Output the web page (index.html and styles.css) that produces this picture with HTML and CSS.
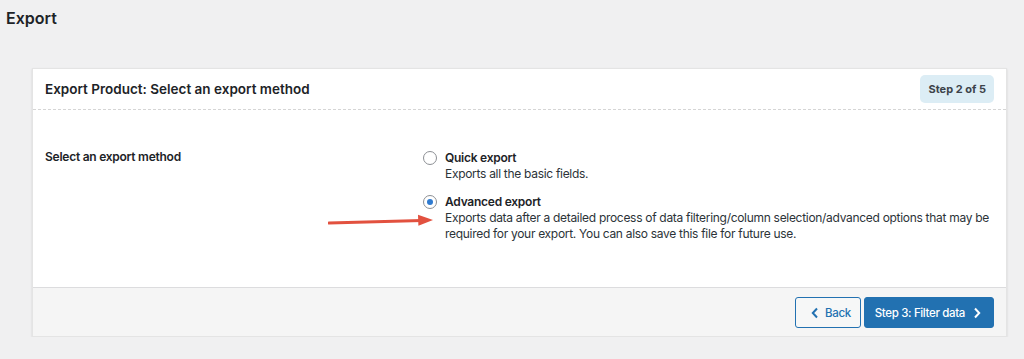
FILE: index.html
```html
<!DOCTYPE html>
<html lang="en">
<head>
  <meta charset="UTF-8" />
  <title>Export</title>
  <link rel="stylesheet" href="styles.css">
</head>
<body>
  <h1 class="page-title">Export</h1>

  <div class="card">
    <div class="card-head">
      <h2>Export Product: Select an export method</h2>
      <span class="step">Step 2 of 5</span>
    </div>

    <div class="card-body">
      <div class="field-label">Select an export method</div>
      <div class="options">
        <label class="option">
          <input type="radio" name="method" value="quick" />
          <span class="option-text">
            <strong>Quick export</strong>
            <span class="desc">Exports all the basic fields.</span>
          </span>
        </label>
        <label class="option">
          <input type="radio" name="method" value="advanced" checked />
          <span class="option-text">
            <strong>Advanced export</strong>
            <span class="desc">Exports data after a detailed process of data filtering/column selection/advanced options that may be required for your export. You can also save this file for future use.</span>
          </span>
        </label>
        <svg class="arrow" width="112" height="16" viewBox="0 0 112 16">
          <path d="M1 10 L94 7.4" stroke="#e2513f" stroke-width="3" stroke-linecap="round" fill="none"/>
          <path d="M90 1.8 L105 7 L90.4 12.8 Z" fill="#e2513f"/>
        </svg>
      </div>
    </div>

    <div class="card-foot">
      <button class="btn btn-back">
        <svg width="8" height="12" viewBox="0 0 8 12"><path d="M6 1.5 L1.8 6 L6 10.5" stroke="currentColor" stroke-width="2" fill="none"/></svg>
        Back
      </button>
      <button class="btn btn-primary">
        Step 3: Filter data
        <svg width="8" height="12" viewBox="0 0 8 12"><path d="M2 1.5 L6.2 6 L2 10.5" stroke="currentColor" stroke-width="2" fill="none"/></svg>
      </button>
    </div>
  </div>
</body>
</html>
```

FILE: styles.css
```css
body {
  margin: 0;
  background: #f0f0f1;
  color: #1d2327;
  font-family: Inter, "Noto Sans", sans-serif;
  font-size: 12px;
  letter-spacing: -0.25px;
}
.page-title {
  margin: 0;
  padding: 8px 6px 0;
  font-size: 16px;
  font-weight: 600;
  line-height: 20px;
  letter-spacing: 0;
}
.card {
  margin: 40px 17px 0 32px;
  background: #fff;
  border: 1px solid #e4e4e4;
  box-shadow: 0 1px 2px rgba(0, 0, 0, 0.12);
}
.card-head {
  display: flex;
  align-items: center;
  justify-content: space-between;
  padding: 6px 12px 6px 12px;
  border-bottom: 1px dashed #d5d5d5;
}
.card-head h2 {
  margin: 0;
  font-size: 13.5px;
  font-weight: 600;
  letter-spacing: 0;
}
.step {
  background: #dcedf5;
  color: #3c434a;
  font-size: 11px;
  font-weight: 700;
  letter-spacing: 0;
  padding: 0 8px;
  line-height: 28px;
  border-radius: 5px;
}
.card-body {
  display: grid;
  grid-template-columns: 378px 1fr;
  padding: 40px 12px 45px 12px;
}
.field-label {
  font-weight: 600;
  margin-top: -1px;
}
.options {
  position: relative;
  display: flex;
  flex-direction: column;
  gap: 12px;
}
.option {
  display: flex;
  gap: 8px;
  align-items: flex-start;
}
.option input {
  appearance: none;
  margin: 1px 0 0 0;
  width: 14px;
  height: 14px;
  border: 1px solid #8c8f94;
  border-radius: 50%;
  background: #fff;
  flex: none;
  position: relative;
}
.option input:checked::after {
  content: "";
  position: absolute;
  left: 3px;
  top: 3px;
  width: 6px;
  height: 6px;
  border-radius: 50%;
  background: #2f7bd0;
}
.option-text {
  display: flex;
  flex-direction: column;
  line-height: 16px;
}
.option-text strong {
  font-weight: 600;
}
.desc {
  color: #2c3338;
  letter-spacing: -0.3px;
}
.arrow {
  position: absolute;
  left: -95px;
  top: 63px;
}
.card-foot {
  display: flex;
  justify-content: flex-end;
  gap: 3px;
  padding: 9px 12px 8px;
  background: #f5f5f5;
  border-top: 1px solid #dcdcde;
}
.btn {
  display: flex;
  align-items: center;
  height: 31px;
  border-radius: 3px;
  font-family: inherit;
  font-size: 11.5px;
  font-weight: 500;
  letter-spacing: -0.35px;
  cursor: pointer;
}
.btn-back {
  gap: 6px;
  padding: 0 9px 0 15px;
  background: #f6f7f7;
  border: 1px solid #2271b1;
  color: #2271b1;
}
.btn-primary {
  gap: 8px;
  padding: 0 12px 0 10px;
  background: #2271b1;
  border: 1px solid #2271b1;
  color: #fff;
}
```
